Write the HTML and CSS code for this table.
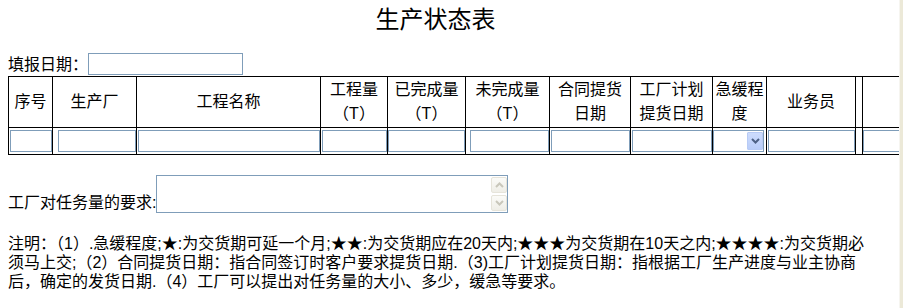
FILE: index.html
```html
<!DOCTYPE html>
<html lang="zh-CN">
<head>
<meta charset="utf-8">
<title>生产状态表</title>
<link rel="stylesheet" href="styles.css">
</head>
<body>
<div class="page">
  <div class="title">生产状态表</div>
  <div class="date-row">
    <span class="label">填报日期：</span>
    <input class="field date" type="text">
  </div>
  <table class="grid">
    <thead>
      <tr>
        <th class="c1">序号</th>
        <th class="c2">生产厂</th>
        <th class="c3">工程名称</th>
        <th class="c4">工程量<br>（T）</th>
        <th class="c5">已完成量<br>（T）</th>
        <th class="c6">未完成量<br>（T）</th>
        <th class="c7">合同提货<br>日期</th>
        <th class="c8">工厂计划<br>提货日期</th>
        <th class="c9">急缓程<br>度</th>
        <th class="c10">业务员</th>
        <th class="c11"></th>
        <th class="c12"></th>
      </tr>
    </thead>
    <tbody>
      <tr>
        <td><input class="field w1" type="text"></td>
        <td><input class="field w2" type="text"></td>
        <td><input class="field w3" type="text"></td>
        <td><input class="field w4" type="text"></td>
        <td><input class="field w5" type="text"></td>
        <td><input class="field w6" type="text"></td>
        <td><input class="field w7" type="text"></td>
        <td><input class="field w8" type="text"></td>
        <td>
          <div class="select">
            <span class="drop">
              <svg width="9" height="6" viewBox="0 0 9 6"><path d="M1 1 L4.5 4.5 L8 1" fill="none" stroke="#4d6185" stroke-width="2"/></svg>
            </span>
          </div>
        </td>
        <td><input class="field w10" type="text"></td>
        <td></td>
        <td><input class="field w12" type="text"></td>
      </tr>
    </tbody>
  </table>
  <div class="req-row">
    <span class="label req-label">工厂对任务量的要求:</span>
    <div class="memo">
      <textarea class="memo-text"></textarea>
      <div class="memo-bar">
        <span class="memo-btn">
          <svg width="9" height="6" viewBox="0 0 9 6"><path d="M1 5 L4.5 1.5 L8 5" fill="none" stroke="#c9c7bb" stroke-width="2"/></svg>
        </span>
        <span class="memo-btn">
          <svg width="9" height="6" viewBox="0 0 9 6"><path d="M1 1 L4.5 4.5 L8 1" fill="none" stroke="#c9c7bb" stroke-width="2"/></svg>
        </span>
      </div>
    </div>
  </div>
  <p class="notes">注明：（1）.急缓程度;★:为交货期可延一个月;★★:为交货期应在20天内;★★★为交货期在10天之内;★★★★:为交货期必<br>须马上交;（2）合同提货日期：指合同签订时客户要求提货日期.（3)工厂计划提货日期：指根据工厂生产进度与业主协商<br>后，确定的发货日期.（4）工厂可以提出对任务量的大小、多少，缓急等要求。</p>
</div>
<div class="vscroll"></div>
</body>
</html>
```
FILE: styles.css
```css
html, body {
  margin: 0;
  padding: 0;
  overflow: hidden;
  background: #fff;
}
body {
  font-family: "Liberation Sans", "Noto Sans CJK SC", sans-serif;
  font-size: 16px;
  color: #000;
}
.page {
  box-sizing: border-box;
  padding: 8px 0 0 8px;
  width: 899px;
  overflow: hidden;
}
.title {
  width: 855px;
  text-align: center;
  font-size: 24px;
  line-height: 24px;
  height: 24px;
  margin-bottom: 21px;
}
.date-row {
  display: flex;
  align-items: center;
  height: 23px;
}
.label {
  line-height: 20px;
  white-space: nowrap;
}
.field {
  box-sizing: border-box;
  height: 22px;
  border: 1px solid #7f9db9;
  background: #fff;
  padding: 0 2px;
  margin: 0;
  font: inherit;
  display: block;
  outline: none;
}
.date {
  width: 155px;
  margin-top: -1px;
}
.grid {
  border-collapse: separate;
  border-spacing: 0;
  table-layout: fixed;
  width: 975px;
  border-left: 1px solid #000;
  border-top: 1px solid #000;
}
.grid th,
.grid td {
  box-sizing: border-box;
  border-right: 1px solid #000;
  border-bottom: 1px solid #000;
  padding: 0;
}
.grid th {
  font-weight: normal;
  line-height: 24px;
  height: 51px;
  text-align: center;
  vertical-align: middle;
}
.grid td {
  height: 27px;
  padding: 2px 0;
}
.grid td .field,
.grid td .select {
  margin-left: auto;
}
.c1 { width: 44px; }
.c2 { width: 84px; }
.c3 { width: 184px; }
.c4 { width: 67px; }
.c5 { width: 78px; }
.c6 { width: 84px; }
.c7 { width: 81px; }
.c8 { width: 82px; }
.c9 { width: 54px; }
.c10 { width: 89px; }
.c11 { width: 7px; }
.c12 { width: 120px; }
.w1 { width: 42px; }
.w2 { width: 78px; }
.w3 { width: 182px; }
.w4 { width: 65px; }
.w5 { width: 77px; }
.w6 { width: 79px; }
.w7 { width: 79px; }
.w8 { width: 80px; }
.w10 { width: 87px; }
.w12 { width: 119px; }
.select {
  box-sizing: border-box;
  width: 51px;
  height: 22px;
  margin-right: 2px;
  border: 1px solid #7f9db9;
  padding: 1px 0 1px 1px;
  display: flex;
  justify-content: flex-end;
  background: #fff;
}
.drop {
  box-sizing: border-box;
  width: 16px;
  height: 18px;
  border: 1px solid #b8cbf5;
  border-radius: 1px;
  background: linear-gradient(#cddcfd, #b9cdf9);
  display: flex;
  align-items: center;
  justify-content: center;
}
.req-row {
  display: flex;
  align-items: flex-end;
  margin-top: 20px;
}
.req-label {
  line-height: 20px;
}
.memo {
  box-sizing: border-box;
  width: 352px;
  height: 38px;
  border: 1px solid #7f9db9;
  display: flex;
  background: #fff;
}
.memo-text {
  flex: 1;
  border: 0;
  resize: none;
  outline: none;
  margin: 0;
  padding: 0;
  font: inherit;
  background: transparent;
}
.memo-bar {
  width: 16px;
  padding: 1px 0;
  display: flex;
  flex-direction: column;
  justify-content: space-between;
}
.memo-btn {
  box-sizing: border-box;
  width: 16px;
  height: 16px;
  border: 1px solid #e6e4da;
  border-radius: 2px;
  background: linear-gradient(#fbfbf8, #efeee7);
  display: flex;
  align-items: center;
  justify-content: center;
}
.notes {
  margin: 21px 0 0 0;
  line-height: 19px;
  white-space: nowrap;
}
.vscroll {
  position: fixed;
  top: 0;
  right: 0;
  width: 4px;
  height: 100%;
  box-sizing: border-box;
  border-left: 1px solid #f6f5f0;
  background: #ece9d8;
}
```
